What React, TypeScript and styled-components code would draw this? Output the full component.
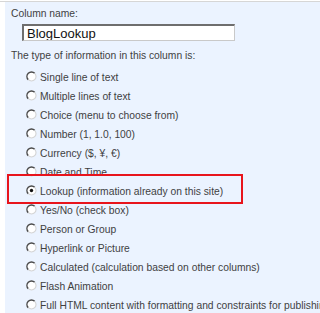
import React from "react";
import styled, { createGlobalStyle } from "styled-components";

const GlobalStyle = createGlobalStyle`
  html, body {
    margin: 0;
    padding: 0;
    background: #ffffff;
  }
  body {
    font-family: "Liberation Sans", Arial, sans-serif;
  }
`;

const fieldTypes = [
  "Single line of text",
  "Multiple lines of text",
  "Choice (menu to choose from)",
  "Number (1, 1.0, 100)",
  "Currency ($, ¥, €)",
  "Date and Time",
  "Lookup (information already on this site)",
  "Yes/No (check box)",
  "Person or Group",
  "Hyperlink or Picture",
  "Calculated (calculation based on other columns)",
  "Flash Animation",
  "Full HTML content with formatting and constraints for publishing",
];

// old-style sunken radio button
const Radio = ({ checked }: { checked?: boolean }) => (
  <RadioIcon width="11" height="11" viewBox="0 0 11 11">
    <circle cx="5.5" cy="5.5" r="4.3" fill="#ffffff" />
    <path d="M2.3 8.7 A4.5 4.5 0 0 1 8.7 2.3" fill="none" stroke="#4a4a4a" strokeWidth="1.5" />
    <path d="M8.7 2.3 A4.5 4.5 0 0 1 2.3 8.7" fill="none" stroke="#d4d4d4" strokeWidth="1.1" />
    {checked && <circle cx="5.5" cy="5.5" r="1.7" fill="#111111" />}
  </RadioIcon>
);

export default function App() {
  return (
    <>
      <GlobalStyle />
      <Page>
        <Panel>
          <Label>Column name:</Label>
          <NameInput defaultValue="BlogLookup" />
          <Label $top={8}>The type of information in this column is:</Label>
          <Options>
            {fieldTypes.map((t) => (
              <Option key={t} $highlight={t.startsWith("Lookup")}>
                <Radio checked={t.startsWith("Lookup")} />
                <OptionText>{t}</OptionText>
              </Option>
            ))}
          </Options>
        </Panel>
      </Page>
    </>
  );
}

const Page = styled.div`
  width: 320px;
  height: 313px;
  overflow: hidden;
  margin-top: 1px;
  border-top: 1px solid #d6d6d6;
  padding-left: 5px;
  box-sizing: border-box;
  background: #ffffff;
`;

const Panel = styled.div`
  height: 100%;
  background: #ebf3ff;
  padding: 5px 0 0 6px;
  box-sizing: border-box;
  color: #3f3f3f;
`;

const Label = styled.div<{ $top?: number }>`
  font-size: 10.3px;
  line-height: 13px;
  margin-top: ${(p) => p.$top || 0}px;
  white-space: nowrap;
`;

const NameInput = styled.input`
  display: block;
  margin: 4px 0 0 11px;
  width: 213px;
  height: 17px;
  box-sizing: border-box;
  padding: 0 0 0 3px;
  border-style: solid;
  border-width: 2px 1px 1px 2px;
  border-color: #6e6e6e #c9c9c9 #c9c9c9 #6e6e6e;
  background: #ffffff;
  font-family: "Liberation Sans", Arial, sans-serif;
  font-size: 13px;
  color: #111111;
  outline: none;
`;

const Options = styled.div`
  display: flex;
  flex-direction: column;
  margin-top: 6px;
`;

const Option = styled.div<{ $highlight?: boolean }>`
  display: flex;
  align-items: center;
  height: 19px;
  padding-left: 15px;
  white-space: nowrap;
  position: relative;
  ${(p) =>
    p.$highlight &&
    `
    &::before {
      content: "";
      position: absolute;
      left: -4px;
      top: -8px;
      width: 236px;
      height: 30px;
      border: 2px solid #e8141c;
      box-sizing: border-box;
      pointer-events: none;
    }
  `}
`;

const RadioIcon = styled.svg`
  flex: none;
  margin-right: 3px;
  margin-top: -3px;
`;

const OptionText = styled.span`
  font-size: 10.3px;
  line-height: 13px;
  color: #3f3f3f;
`;
